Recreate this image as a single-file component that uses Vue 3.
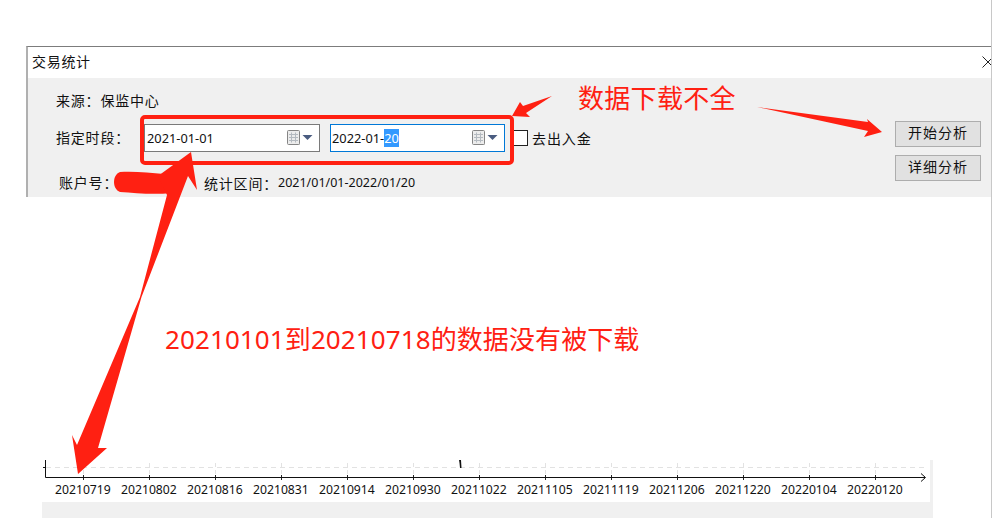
<script setup>
const labels = ['20210719','20210802','20210816','20210831','20210914','20210930','20211022','20211105','20211119','20211206','20211220','20220104','20220120']
</script>

<template>
  <div class="page">
    <section class="dialog">
      <header class="title">
        <span>交易统计</span>
        <svg class="close" width="12" height="12" viewBox="0 0 12 12"><path d="M0.500 0.500 11.500 11.500M11.500 0.500 0.500 11.500" stroke="#222" fill="none"/></svg>
      </header>
      <div class="body">
        <div class="form">
          <div class="row source">来源：保监中心</div>
          <div class="row range">
            <span class="label">指定时段：</span>
            <div class="date">
              <span class="value">2021-01-01</span>
              <svg class="cal" width="26" height="16" viewBox="0 0 26 16">
                <rect x="1" y="2" width="11" height="12" fill="#9a9a9a" opacity=".35" transform="translate(1 1)"/>
                <rect x="0.500" y="0.500" width="12" height="14" rx="1" fill="#ececec" stroke="#858585"/>
                <path d="M2 4.500h9M2 7.500h9M2 10.500h9M4.500 2.500v10M8.500 2.500v10" stroke="#b4bac0" fill="none"/>
                <path d="M15.500 5h10l-5 5z" fill="#4a5c80"/>
              </svg>
            </div>
            <div class="date active">
              <span class="value">2022-01-<mark>20</mark></span>
              <svg class="cal" width="26" height="16" viewBox="0 0 26 16">
                <rect x="1" y="2" width="11" height="12" fill="#9a9a9a" opacity=".35" transform="translate(1 1)"/>
                <rect x="0.500" y="0.500" width="12" height="14" rx="1" fill="#ececec" stroke="#858585"/>
                <path d="M2 4.500h9M2 7.500h9M2 10.500h9M4.500 2.500v10M8.500 2.500v10" stroke="#b4bac0" fill="none"/>
                <path d="M15.500 5h10l-5 5z" fill="#4a5c80"/>
              </svg>
            </div>
            <label class="check"><span class="box"></span>去出入金</label>
          </div>
          <div class="row info">
            <span class="account">账户号：</span>
            <span class="interval">统计区间：</span>
            <span class="dates">2021/01/01-2022/01/20</span>
          </div>
        </div>
        <div class="actions">
          <button>开始分析</button>
          <button>详细分析</button>
        </div>
      </div>
    </section>

    <section class="chart">
      <div class="plot">
        <svg class="axis" width="888" height="22" viewBox="0 0 888 22">
          <path d="M4 7.500H882" stroke="#e2e2e2" stroke-dasharray="5 4" fill="none"/>
          <path v-for="(l,i) in labels" :key="'g'+i" :d="`M${41.500 + i*66} 3V17`" stroke="#e2e2e2" stroke-dasharray="4 3" fill="none"/>
          <path v-for="(l,i) in labels" :key="'t'+i" :d="`M${41.500 + i*66} 15V20`" stroke="#222" fill="none"/>
          <path d="M3.500 0V17.500H883" stroke="#111" fill="none"/>
          <path d="M1 7.500H4" stroke="#111" fill="none"/>
          <path d="M879 13.500l4.500 4-4.500 4" stroke="#111" fill="none"/>
          <path d="M417 0h2l.5 8h-1.500l-.5-5z" fill="#111"/>
        </svg>
        <div class="labels"><span v-for="l in labels" :key="l">{{ l }}</span></div>
      </div>
    </section>

    <svg class="marks" width="992" height="518" viewBox="0 0 992 518">
      <path d="M120 172C135 171 150 173 164 174L170 193C155 195 135 193 120 192C112 189 112 175 120 172Z" fill="#ff2012"/>
      <rect x="142" y="117" width="370" height="46" rx="3" fill="none" stroke="#ff2012" stroke-width="4"/>
      <path d="M512 116 520 102 523 106 552 96 526 113 530 117Z" fill="#ff2012"/>
      <path d="M757 107 868 122 867 119 882 132 864 137 868 131Z" fill="#ff2012"/>
      <path d="M191 152 197 190 188 176 141.500 297 98 448 107 448 78 474 72 435 77 445 140 297 167 195 158 176Z" fill="#ff2012"/>
    </svg>
    <div class="note top">数据下载不全</div>
    <div class="note mid">20210101到20210718的数据没有被下载</div>
  </div>
</template>

<style scoped>
.page {
  position: relative;
  width: 992px;
  height: 518px;
  overflow: hidden;
  background: #fff;
  font-family: "Noto Sans", "Noto Sans CJK SC", sans-serif;
  font-size: 14px;
  color: #111;
  border-right: 1px solid #c8c8c8;
  box-sizing: border-box;
}
.dialog {
  margin: 46px 0 0 26px;
  height: 151px;
  border-top: 1px solid #7c7c7c;
  border-left: 2px solid #b0b0b0;
  box-sizing: border-box;
  display: flex;
  flex-direction: column;
}
.title {
  height: 31px;
  flex: none;
  padding: 0 0 0 4px;
  display: flex;
  align-items: center;
  justify-content: space-between;
  letter-spacing: 0.7px;
}
.title span { padding-bottom: 4px; }
.close { margin-right: -3px; margin-top: -1px; }
.body {
  flex: 1;
  background: #f0f0f0;
  display: flex;
  justify-content: space-between;
}
.form {
  padding: 13px 0 0 28px;
  display: flex;
  flex-direction: column;
}
.row { display: flex; align-items: center; }
.source { height: 18px; letter-spacing: 0.8px; }
.range { height: 28px; margin-top: 15px; }
.label { width: 88px; letter-spacing: 0.8px; flex: none; padding-bottom: 3px; }
.date {
  width: 176px;
  height: 28px;
  box-sizing: border-box;
  border: 1px solid #7a7a7a;
  background: #fff;
  margin-right: 10px;
  padding: 0 6px 0 2px;
  display: flex;
  align-items: center;
  justify-content: space-between;
  font-size: 12.8px;
}
.date.active { width: 175px; border-color: #0078d7; padding-left: 1px; }
.date mark { background: #3399ff; color: #fff; }
.value { line-height: 20px; }
.check { display: flex; align-items: center; margin-left: -2px; gap: 4px; letter-spacing: 0.9px; }
.box { width: 15px; height: 16px; box-sizing: border-box; border: 1px solid #222; background: #fff; }
.info { margin-top: 21px; height: 18px; padding-left: 3px; }
.account { width: 145px; letter-spacing: 0.8px; flex: none; }
.interval { letter-spacing: 0.8px; padding-top: 1px; }
.dates { font-size: 12.5px; padding-top: 1px; }
.actions {
  padding: 43px 10px 0 0;
  display: flex;
  flex-direction: column;
  gap: 8px;
}
button {
  width: 86px;
  height: 26px;
  padding: 0 0 4px;
  background: #e1e1e1;
  border: 1px solid #adadad;
  font: inherit;
  letter-spacing: 1px;
  color: #111;
}
.chart {
  margin: 263px 0 0 42px;
  width: 891px;
  height: 58px;
  background: #f0f0f0;
}
.plot { width: 888px; height: 42px; background: #fff; }
.axis { display: block; }
.labels { display: flex; padding-left: 13px; height: 16px; }
.labels span { width: 66px; flex: none; font-size: 12.2px; line-height: 16px; }
.marks { position: absolute; left: 0; top: 0; pointer-events: none; }
.note { position: absolute; color: #ff2012; white-space: nowrap; font-size: 26px; line-height: 36px; }
.note.top { left: 578px; top: 80px; letter-spacing: 0.3px; }
.note.mid { left: 165px; top: 321px; letter-spacing: 0.1px; }
</style>
